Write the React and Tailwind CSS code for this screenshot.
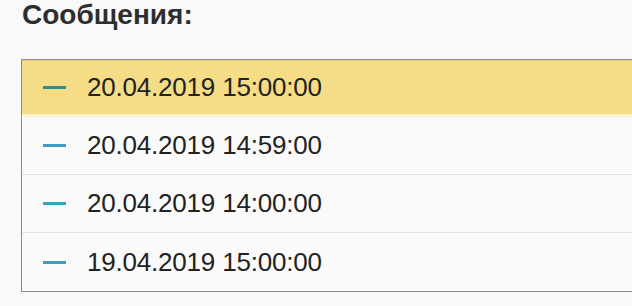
const rows = [
  { date: '20.04.2019 15:00:00', active: true },
  { date: '20.04.2019 14:59:00' },
  { date: '20.04.2019 14:00:00' },
  { date: '19.04.2019 15:00:00' },
];

export default function App() {
  return (
    <div
      className="w-[632px] h-[306px] bg-[#f9f9f9] overflow-hidden"
      style={{ fontFamily: '"Liberation Sans", Arial, sans-serif' }}
    >
      <h1 className="pl-[22px] text-[28px] leading-[30px] font-bold text-[#2e2e2e]">Сообщения:</h1>
      <div className="ml-[21px] mt-[29px] w-[640px] border border-[#8a8a8a] bg-[#fafafa]">
        {rows.map((row, i) => (
          <div
            key={i}
            className={
              row.active
                ? 'h-[57px] flex items-center bg-[#f5dd88] border-t border-[#e7cd78] border-b-[3px] border-b-[#fcf3d2]'
                : 'h-[58px] flex items-center border-b border-[#e3e3e3] last:border-b-0'
            }
          >
            <span
              className={
                'ml-[21px] w-[23px] h-[3px] ' + (row.active ? 'bg-[#2f8d8a]' : 'bg-[#3d9ec2]')
              }
            />
            <span className="ml-[21px] text-[26px] tracking-[-0.2px] text-[#222]">{row.date}</span>
          </div>
        ))}
      </div>
    </div>
  );
}
